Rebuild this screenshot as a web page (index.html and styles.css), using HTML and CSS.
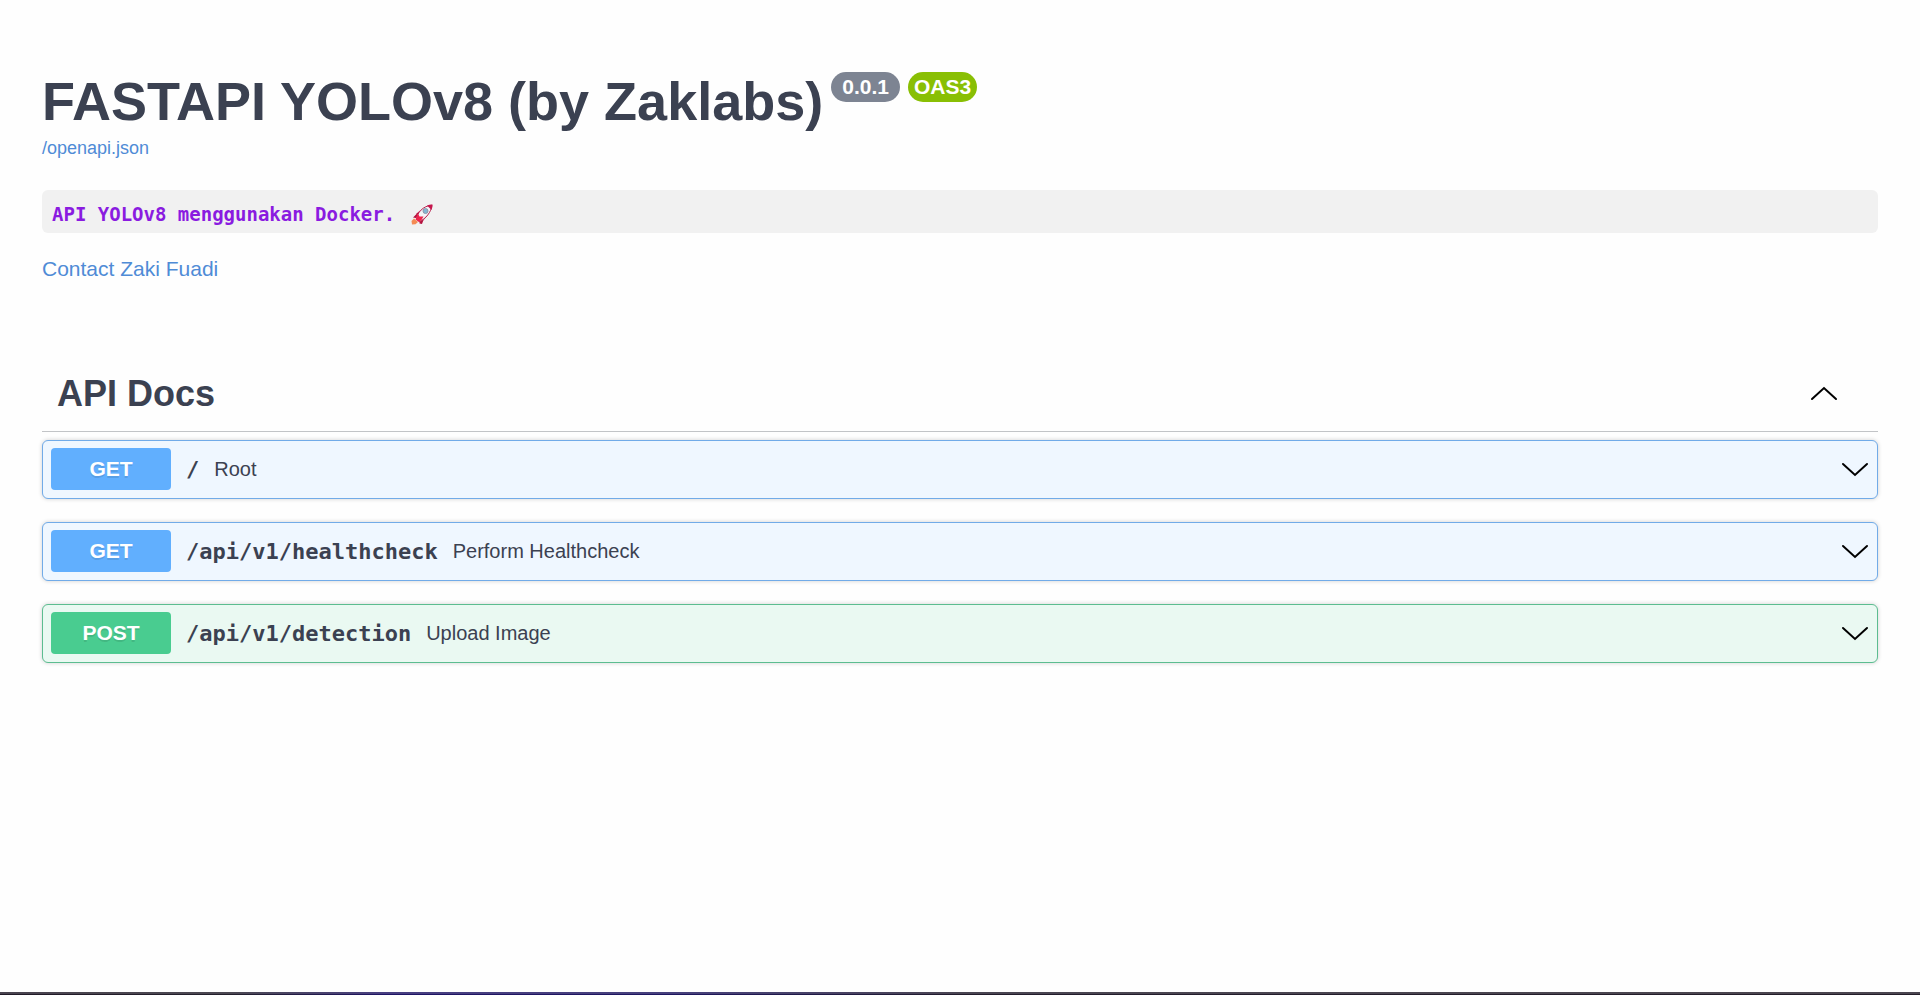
FILE: index.html
```html
<!DOCTYPE html>
<html lang="en">
<head>
<meta charset="utf-8">
<meta name="viewport" content="width=device-width, initial-scale=1">
<title>FASTAPI YOLOv8 (by Zaklabs)</title>
<link rel="stylesheet" href="styles.css">
</head>
<body>
<svg class="sprite" aria-hidden="true">
  <symbol id="chevron-down" viewBox="0 0 28 16">
    <path d="M2 3 14 14 26 3" fill="none" stroke="#000" stroke-width="2" stroke-linecap="round"/>
  </symbol>
  <symbol id="chevron-up" viewBox="0 0 28 16">
    <path d="M2 13 14 2 26 13" fill="none" stroke="#000" stroke-width="2" stroke-linecap="round"/>
  </symbol>
</svg>
<main class="page">
  <header class="info">
    <div class="title-row">
      <h1 class="title">FASTAPI YOLOv8 (by Zaklabs)</h1>
      <span class="badge">0.0.1</span>
      <span class="badge badge-oas">OAS3</span>
    </div>
    <a class="spec-link" href="#">/openapi.json</a>
    <pre class="description"><code>API YOLOv8 menggunakan Docker.</code><svg class="rocket" viewBox="0 0 22 21" role="img" aria-label="Rocket">
      <path d="M1 20.500 0.500 17 3 14.500 7 18 4.500 20.200z" fill="#f58b54"/>
      <path d="M5 10 9 6.500 8 10.500zM11 18 16 12 14.500 12z" fill="#c5164d"/>
      <path d="M2 13.500 6.500 9 8 9.500 5 14zM8.500 17 12 13 13 14.500 11 20 8.500 19.500z" fill="#b3123f"/>
      <path d="M5.500 15C6 9 12 1.800 20.800 1.200 20.500 8 14.500 15 8.500 17.500z" fill="#f4f4f7" stroke="#b92450" stroke-width="1"/>
      <path d="M16 1.500Q18.500 0.300 21.500 0.400 21.700 3 20.500 6z" fill="#c5164d"/>
      <path d="M4.500 15.500 7 9.500 8.500 12.500 12.500 12.500 10.500 16 8 18z" fill="#ed254c"/>
      <circle cx="14.500" cy="7" r="2.500" fill="#82b8d4" stroke="#9295a8" stroke-width="1"/>
    </svg></pre>
    <a class="contact" href="#">Contact Zaki Fuadi</a>
  </header>
  <section class="docs">
    <h2 class="tag"><button class="tag-toggle" type="button" aria-expanded="true"><span>API Docs</span><svg class="chevron"><use href="#chevron-up"/></svg></button></h2>
    <div class="operations">
      <button class="op op-get" type="button" aria-expanded="false">
        <span class="method">GET</span><span class="path">/</span><span class="summary">Root</span>
        <svg class="chevron"><use href="#chevron-down"/></svg>
      </button>
      <button class="op op-get" type="button" aria-expanded="false">
        <span class="method">GET</span><span class="path">/api/v1/healthcheck</span><span class="summary">Perform Healthcheck</span>
        <svg class="chevron"><use href="#chevron-down"/></svg>
      </button>
      <button class="op op-post" type="button" aria-expanded="false">
        <span class="method">POST</span><span class="path">/api/v1/detection</span><span class="summary">Upload Image</span>
        <svg class="chevron"><use href="#chevron-down"/></svg>
      </button>
    </div>
  </section>
</main>
<footer class="edge"></footer>
</body>
</html>
```

FILE: styles.css
```css
* {
  box-sizing: border-box;
}

body {
  margin: 0;
  min-height: 100vh;
  display: flex;
  flex-direction: column;
  background: #fefefe;
  color: #3b4151;
  font-family: "Liberation Sans", Arial, sans-serif;
}

a {
  color: #4f8bd6;
  text-decoration: none;
}

button {
  font: inherit;
  color: inherit;
  text-align: left;
  cursor: pointer;
}

.sprite {
  display: none;
}

.page {
  flex: 1;
  padding: 72px 42px 40px;
}

.info {
  display: flex;
  flex-direction: column;
  align-items: flex-start;
}

.title-row {
  display: flex;
  align-items: flex-start;
  gap: 8px;
}

.title {
  margin: 0;
  font-size: 54px;
  line-height: 58px;
}

.badge {
  padding: 0 11px;
  border-radius: 15px;
  background: #7d8492;
  color: #fff;
  font-size: 21px;
  font-weight: 700;
  line-height: 30px;
}

.badge-oas {
  padding: 0 6px;
  background: #89bf04;
}

.spec-link {
  margin-top: 6px;
  font-size: 18px;
  line-height: 24px;
}

.description {
  align-self: stretch;
  display: flex;
  align-items: center;
  gap: 16px;
  margin: 30px 0 24px;
  padding: 12px 10px 6px;
  border-radius: 6px;
  background: #f1f1f1;
  color: #8a1be0;
  font-weight: 700;
  font-size: 19px;
  line-height: 25px;
}

.description code,
.path {
  font-family: Consolas, "DejaVu Sans Mono", monospace;
}

.rocket {
  width: 22px;
  height: 21px;
}

.contact {
  font-size: 21px;
  line-height: 24px;
}

.docs {
  margin-top: 82px;
}

.tag {
  margin: 0;
  border-bottom: 1px solid #c2c4c7;
  font-size: 36px;
  line-height: 44px;
}

.tag-toggle {
  display: flex;
  align-items: center;
  justify-content: space-between;
  width: 100%;
  padding: 9px 40px 15px 15px;
  border: 0;
  background: none;
}

.chevron {
  flex: none;
  width: 28px;
  height: 16px;
}

.operations {
  display: flex;
  flex-direction: column;
  gap: 23px;
  padding-top: 8px;
}

.op {
  display: flex;
  align-items: center;
  width: 100%;
  padding: 7px 8px 8px;
  border: 1px solid;
  border-radius: 6px;
  box-shadow: 0 0 4px rgba(0, 0, 0, 0.19);
}

.op-get {
  border-color: #71abe8;
  background: #eff7ff;
}

.op-post {
  border-color: #5cbd90;
  background: #eaf9f2;
}

.method {
  flex: none;
  width: 120px;
  border-radius: 4px;
  background: #61affe;
  color: #fff;
  font-size: 21px;
  font-weight: 700;
  line-height: 42px;
  text-align: center;
  text-shadow: 0 2px 0 rgba(0, 0, 0, 0.1);
}

.op-post .method {
  background: #49cc90;
}

.path {
  margin: 0 15px;
  font-size: 22px;
  font-weight: 700;
}

.summary {
  flex: 1;
  font-size: 20px;
}

.edge {
  height: 3px;
  background:
    linear-gradient(rgba(255, 255, 255, 0.18) 2px, transparent 2px),
    linear-gradient(90deg, #211a28 0, #24202c 12%, #201566 20%, #1e1660 35%, #221c2c 50%, #231d29 100%);
}
```
